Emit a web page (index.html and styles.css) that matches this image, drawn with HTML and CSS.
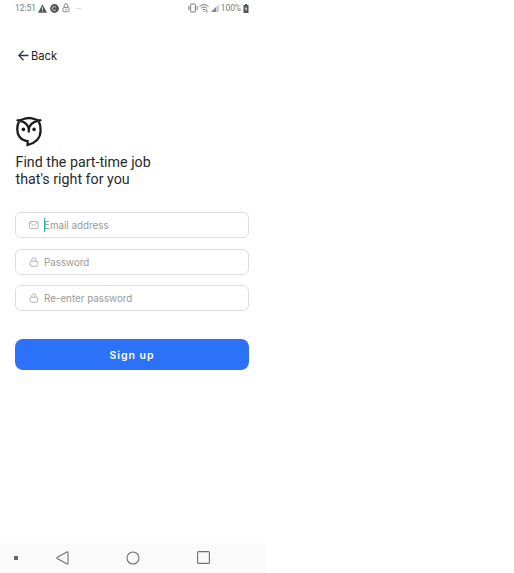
FILE: index.html
```html
<!DOCTYPE html>
<html lang="en">
<head>
    <meta charset="UTF-8">
    <title>Sign up</title>
    <link rel="stylesheet" href="styles.css">
</head>
<body>
    <div class="phone">
        <div class="status_bar">
            <span class="time">12:51</span>
            <svg class="icon_warning" width="9" height="9" viewBox="0 0 9 9"><path d="M4.5 0.3L9 8.7H0z" fill="#555"/><path d="M4.5 3v3M4.5 6.8v1" stroke="#fff" stroke-width="0.8"/></svg>
            <svg class="icon_c" width="9" height="9" viewBox="0 0 9 9"><circle cx="4.5" cy="4.5" r="4.4" fill="#555"/><path d="M6 3.3a2 2 0 1 0 0 2.4" fill="none" stroke="#ddd" stroke-width="0.9"/></svg>
            <svg class="icon_lock" width="8" height="10" viewBox="0 0 8 10"><path d="M2.2 4.4V2.6a1.8 1.8 0 0 1 3.6 0v1.8" fill="none" stroke="#777" stroke-width="0.9"/><rect x="1" y="4.4" width="6" height="4.4" rx="1.2" fill="none" stroke="#777" stroke-width="0.9"/><path d="M4 5.8v1.6" stroke="#777"/></svg>
            <span class="more"></span>
            <div class="status_right">
                <svg width="10" height="10" viewBox="0 0 10 10" fill="none" stroke="#777"><rect x="2.6" y="1" width="4.8" height="8" rx="0.8"/><path d="M0.8 3v4M9.2 3v4"/></svg>
                <svg class="icon_wifi" width="10" height="10" viewBox="0 0 10 10" fill="none" stroke="#777"><path d="M0.6 3.5a6.2 6.2 0 0 1 8.8 0M2 5.3a4.2 4.2 0 0 1 6 0M3.4 7.1a2.2 2.2 0 0 1 3.2 0"/><circle cx="5" cy="8.5" r="0.6" fill="#666" stroke="none"/><path d="M7.8 6.5v3" /></svg>
                <svg class="icon_signal" width="8" height="8" viewBox="0 0 8 8"><path d="M8 0v8H0z" fill="#d0d0d0"/><path d="M5 3v5H0z" fill="#888"/></svg>
                <span class="percent">100%</span>
                <svg class="icon_battery" width="6" height="9" viewBox="0 0 6 9"><path d="M2 0h2v1h1.5v8h-5V1H2z" fill="#555"/><path d="M3.5 2L1.8 5H3L2.5 7.4 4.3 4.4H3z" fill="#fff"/></svg>
            </div>
        </div>

        <a class="back">
            <svg width="11" height="11" viewBox="0 0 11 11"><path d="M10.5 5.5H1M5.5 0.7L0.8 5.5l4.7 4.8" fill="none" stroke="#30344d" stroke-width="1.3"/></svg>
            <span>Back</span>
        </a>

        <!-- owl logo -->
        <svg class="logo" width="26" height="30" viewBox="0 0 26 30">
            <g fill="none" stroke="#1c1c1c" stroke-width="2.3">
                <path d="M0.6 3C3 3.9 4.8 3.2 7 2.3Q13 -0.2 19 2.3C21.2 3.2 23 3.9 25.4 3"/>
                <path d="M3.2 4.4C0.6 8.5 0.5 16 3.5 19.8C5.5 22.4 8.5 23.9 11.6 24.2V28C19 26.4 24.4 21.5 24.6 13.8C24.7 10 24.2 7 22.7 4.4"/>
                <path d="M4 3.8C9.5 5 12.2 7.8 12.8 12.3C13.4 7.8 16.3 5 22 3.8M12.8 10.5V15.6"/>
            </g>
            <circle cx="7.4" cy="12.4" r="1.8" fill="#1c1c1c"/>
            <circle cx="18.1" cy="12.4" r="1.8" fill="#1c1c1c"/>
        </svg>

        <h1>Find the part-time job<br>that's right for you</h1>

        <form>
            <div class="field email_field">
                <svg width="10" height="8" viewBox="0 0 10 8" fill="none" stroke="#aaa" stroke-width="0.9"><rect x="0.5" y="0.5" width="8.6" height="7" rx="1.2"/><path d="M1 1.4L3.9 4q0.9 0.8 1.8 0l2.9-2.6"/></svg>
                <span class="placeholder">Email address</span>
                <span class="caret"></span>
            </div>
            <div class="field password_field">
                <svg width="10" height="10" viewBox="0 0 10 10" fill="none" stroke="#aaa" stroke-width="0.9"><rect x="1" y="4.2" width="7.6" height="5" rx="1.4"/><path d="M2.8 4.2V2.7a2 2 0 0 1 4 0v1.5"/></svg>
                <span class="placeholder">Password</span>
            </div>
            <div class="field">
                <svg width="10" height="10" viewBox="0 0 10 10" fill="none" stroke="#aaa" stroke-width="0.9"><rect x="1" y="4.2" width="7.6" height="5" rx="1.4"/><path d="M2.8 4.2V2.7a2 2 0 0 1 4 0v1.5"/></svg>
                <span class="placeholder">Re-enter password</span>
            </div>
            <button type="button" class="signup_button">Sign up</button>
        </form>

        <div class="nav_bar">
            <span class="nav_dot"></span>
            <svg class="nav_back" width="13" height="14" viewBox="0 0 13 14"><path d="M11 0.9L1.3 6.3q-0.8 0.6 0 1.2L11 13q1 0.3 1-0.7V1.6q0-1-1-0.7z" fill="none" stroke="#707070" stroke-width="1.1"/></svg>
            <svg class="nav_home" width="14" height="14" viewBox="0 0 14 14"><circle cx="7" cy="7" r="6" fill="none" stroke="#707070" stroke-width="1.1"/></svg>
            <svg class="nav_recent" width="13" height="13" viewBox="0 0 13 13"><rect x="0.6" y="0.6" width="11.8" height="11.8" rx="1" fill="none" stroke="#707070" stroke-width="1.1"/></svg>
        </div>
    </div>
</body>
</html>
```
FILE: styles.css
```css
* {
    box-sizing: border-box;
}
body {
    margin: 0;
    background-color: #fff;
    font-family: Inter, sans-serif;
}
svg {
    display: block;
    flex-shrink: 0;
}
.phone {
    display: flex;
    flex-direction: column;
    width: 265px;
    height: 573px;
}
.status_bar {
    display: flex;
    align-items: center;
    height: 16px;
    padding: 0 16px 0 15px;
    font-family: Roboto, sans-serif;
    font-size: 8.4px;
    color: #777;
}
.time {
    width: 23px;
}
.icon_c {
    margin-left: 3px;
}
.icon_lock {
    margin-left: 3px;
}
.more {
    width: 5px;
    height: 1px;
    margin-left: 6px;
    background-color: #ddd;
}
.status_right {
    display: flex;
    align-items: center;
    margin-left: auto;
}
.icon_wifi {
    margin-left: 1px;
}
.icon_signal {
    margin-left: 2px;
}
.percent {
    margin: 0 2px;
}
.back {
    display: flex;
    align-items: center;
    gap: 2px;
    height: 16px;
    margin: 32px 0 0 18px;
    font-size: 11.2px;
    color: #222;
}
.back svg {
    margin-top: -1px;
}
.logo {
    margin: 53px 0 0 16px;
}
h1 {
    margin: 7px 0 0 15.5px;
    font-family: Roboto, sans-serif;
    font-size: 14.25px;
    font-weight: 400;
    line-height: 17px;
    color: #2a2a2a;
}
form {
    margin: 24px 16px 0 15px;
}
.field {
    position: relative;
    display: flex;
    align-items: center;
    gap: 5px;
    height: 26px;
    padding-left: 13px;
    border: 1px solid #dedede;
    border-radius: 6px;
    font-size: 9.8px;
    color: #999;
}
.email_field {
    margin-bottom: 11px;
}
.password_field {
    margin-bottom: 10px;
}
/* text cursor over the first letter */
.caret {
    position: absolute;
    left: 28px;
    top: 5px;
    width: 1px;
    height: 14px;
    background-color: #20b89a;
}
.signup_button {
    display: block;
    width: 100%;
    height: 31px;
    margin-top: 28px;
    padding: 1px 0 0;
    border: none;
    border-radius: 8px;
    background-color: #2b72f8;
    font-family: Inter, sans-serif;
    font-size: 10.5px;
    font-weight: 600;
    letter-spacing: 1px;
    color: #fff;
}
.nav_bar {
    display: flex;
    align-items: center;
    height: 30px;
    margin-top: auto;
    padding: 0 0 1px 14px;
    background-color: #fafafa;
}
.nav_dot {
    width: 4px;
    height: 4px;
    background-color: #666;
}
.nav_back {
    margin-left: 38px;
}
.nav_home {
    margin-left: 57px;
}
.nav_recent {
    margin-left: 57px;
}
```
